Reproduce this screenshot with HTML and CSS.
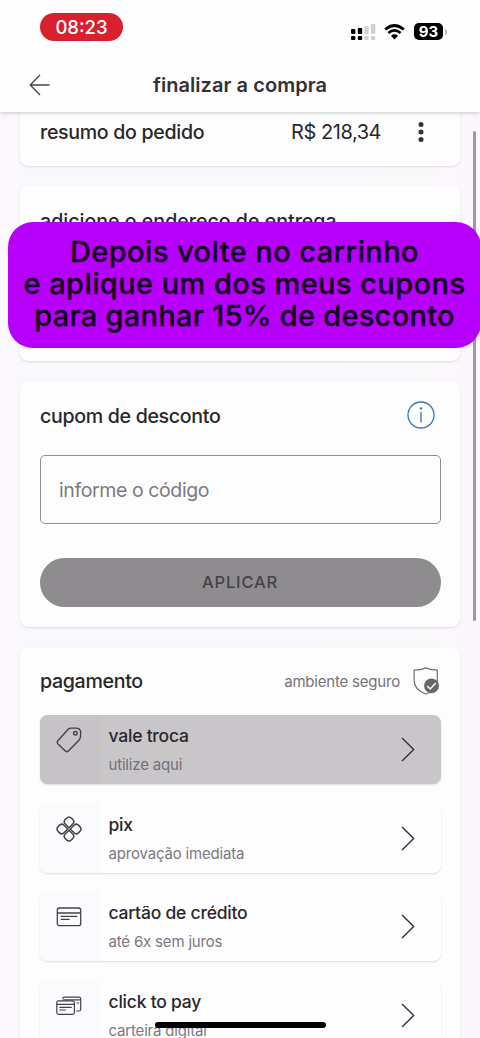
FILE: index.html
```html
<!DOCTYPE html>
<html lang="pt-BR">
<head>
<meta charset="utf-8">
<title>finalizar a compra</title>
<link rel="stylesheet" href="styles.css">
</head>
<body>
<div class="screen">
  <header class="topbar">
    <div class="status">
      <span class="clock">08:23</span>
      <div class="status-icons">
        <svg class="signal" width="25" height="18" viewBox="0 0 25 18"><g fill="#000"><rect x="0" y="6" width="4.4" height="5" rx="1"/><rect x="6.8" y="5" width="4.4" height="6" rx="1"/><rect x="0" y="13" width="4.4" height="4" rx="1"/><rect x="6.8" y="13" width="4.4" height="4" rx="1"/></g><g fill="#d0d0d0"><rect x="13.3" y="3" width="4.4" height="8" rx="1"/><rect x="19.9" y="1" width="4.4" height="10" rx="1"/><rect x="13.3" y="13" width="4.4" height="4" rx="1"/><rect x="19.9" y="13" width="4.4" height="4" rx="1"/></g></svg>
        <svg class="wifi" width="21" height="16" viewBox="0 0 21 16"><g fill="none" stroke="#000" stroke-width="2.7"><path d="M1.2 5.6Q10.5-2.6 19.8 5.6"/><path d="M4.4 9.1Q10.5 3.8 16.6 9.1"/></g><path d="M6.9 11.8Q10.5 8.9 14.1 11.8L10.5 15.6Z"/></svg>
        <span class="battery">93</span><span class="battery-cap"></span>
      </div>
    </div>
    <div class="titlebar">
      <svg class="back" width="22" height="22" viewBox="0 0 22 22"><path d="M20.5 11H1.5M11 1L1.2 11L11 21" fill="none" stroke="#444" stroke-width="1.3"/></svg>
      <h1 class="title">finalizar a compra</h1>
    </div>
  </header>

  <main class="content">
    <section class="card summary">
      <h2 class="heading summary-label">resumo do pedido</h2>
      <span class="total">R$ 218,34</span>
      <svg class="dots" width="6" height="20" viewBox="0 0 6 20" fill="#333"><circle cx="3" cy="2.6" r="2.5"/><circle cx="3" cy="10" r="2.5"/><circle cx="3" cy="17.4" r="2.5"/></svg>
    </section>

    <section class="card address"><h2 class="heading address-label">adicione o endereço de entrega</h2></section>

    <section class="card coupon">
      <div class="row">
        <h2 class="heading coupon-label">cupom de desconto</h2>
        <svg class="info" width="28" height="28" viewBox="0 0 28 28"><circle cx="14" cy="14" r="13" fill="none" stroke="#3777b8" stroke-width="1.3"/><path d="M14 11V21.5" stroke="#3777b8" stroke-width="1.4"/><circle cx="14" cy="7.4" r="1.2" fill="#3777b8"/></svg>
      </div>
      <div class="field">informe o código</div>
      <div class="apply">APLICAR</div>
    </section>

    <section class="card payment">
      <div class="row payment-head">
        <h2 class="heading payment-label">pagamento</h2>
        <span class="secure">ambiente seguro</span>
        <svg class="shield" width="26" height="28" viewBox="0 0 26 28"><path d="M1.1 3.2Q8 3.1 12.9.9Q18 3.1 24.3 3.2V14C24.3 21 18.5 25.5 12.7 27C6 24.5 1.1 19.5 1.1 13Z" fill="none" stroke="#707074" stroke-width="1.2"/><circle cx="18.5" cy="18.8" r="7.4" fill="#68666a"/><path d="M14.2 19L17.2 22L22.8 16" fill="none" stroke="#fff" stroke-width="1.5"/></svg>
      </div>
      <div class="options">
        <div class="option selected">
          <div class="tile"><svg width="26" height="26" viewBox="0 0 26 26" fill="none" stroke="#454347" stroke-width="1.4"><path d="M12.4 2.1Q13.5 1.2 15 1.1L20 1.1Q24.6 1.1 24.7 5.5L24.5 9.5Q24.3 11.7 22.7 13.4L12.4 24Q10.7 25.5 9 23.8L2 17Q.5 15.2 2.1 13.5Z"/><circle cx="19.4" cy="6.3" r="1.8"/></svg></div>
          <div class="labels"><span class="name">vale troca</span><span class="sub">utilize aqui</span></div>
          <svg class="chevron" width="14" height="25" viewBox="0 0 14 25"><path d="M1 1L12.7 12.5L1 24"/></svg>
        </div>
        <div class="option">
          <div class="tile"><svg width="26" height="26" viewBox="0 0 26 26" fill="none" stroke="#454347" stroke-width="1.5"><g transform="rotate(45 13 13)"><path d="M3.6 7.2Q3.6 3.6 7.2 3.6H8.7Q12.1 3.6 12.1 6.8V12.1H6.8Q3.6 12.1 3.6 8.7Z"/><path d="M13.9 12.1V6.8Q13.9 3.6 17.3 3.6H18.8Q22.4 3.6 22.4 7.2V8.7Q22.4 12.1 19.2 12.1Z"/><path d="M13.9 13.9H19.2Q22.4 13.9 22.4 17.3V18.8Q22.4 22.4 18.8 22.4H17.3Q13.9 22.4 13.9 19.2Z"/><path d="M3.6 17.3Q3.6 13.9 6.8 13.9H12.1V19.2Q12.1 22.4 8.7 22.4H7.2Q3.6 22.4 3.6 18.8Z"/></g></svg></div>
          <div class="labels"><span class="name">pix</span><span class="sub">aprovação imediata</span></div>
          <svg class="chevron" width="14" height="25" viewBox="0 0 14 25"><path d="M1 1L12.7 12.5L1 24"/></svg>
        </div>
        <div class="option">
          <div class="tile"><svg width="26" height="26" viewBox="0 0 26 26" fill="none" stroke="#454347" stroke-width="1.3"><rect x="1.3" y="4" width="23.4" height="17.6" rx="2.2"/><path d="M1.3 9H24.7M4.7 12.3H21.3M4.7 15.3H13.6"/></svg></div>
          <div class="labels"><span class="name">cartão de crédito</span><span class="sub">até 6x sem juros</span></div>
          <svg class="chevron" width="14" height="25" viewBox="0 0 14 25"><path d="M1 1L12.7 12.5L1 24"/></svg>
        </div>
        <div class="option">
          <div class="tile"><svg width="26" height="26" viewBox="0 0 26 26" fill="none" stroke="#454347" stroke-width="1.2"><rect x=".8" y="7.8" width="17.6" height="13.6" rx="1.8"/><path d="M.8 11.3H18.4M3.4 14.3H15.8M3.4 17H9.8M6.5 5.8Q6.5 4.2 8.5 4.2H22.8Q24.7 4.2 24.7 6V16.2Q24.7 18 22.9 18H20.2M6.8 6.8H24.7M20.6 10H23.2"/></svg></div>
          <div class="labels"><span class="name">click to pay</span><span class="sub">carteira digital</span></div>
          <svg class="chevron" width="14" height="25" viewBox="0 0 14 25"><path d="M1 1L12.7 12.5L1 24"/></svg>
        </div>
      </div>
    </section>
  </main>

  <div class="banner"><span class="line-one">Depois volte no carrinho</span><span class="line-two">e aplique um dos meus cupons</span><span class="line-three">para ganhar 15% de desconto</span></div>
  <div class="scrollbar"></div>
  <div class="home-indicator"></div>
</div>
</body>
</html>
```
FILE: styles.css
```css
* { box-sizing: border-box; }
body { margin: 0; font-family: Inter, "Liberation Sans", sans-serif; color: #29272b; }
svg { display: block; flex: none; }
.screen { position: relative; z-index: 0; width: 480px; height: 1038px; overflow: hidden; background: linear-gradient(90deg, #faf8fc, #fbf8fc 90%, #fdf6fd); display: flex; flex-direction: column; white-space: nowrap; }
.topbar { flex: none; height: 112px; background: #fefefe; box-shadow: 0 1px 4px rgba(0,0,0,.2); position: relative; }
.status { height: 56px; padding: 13px 33px 0 40px; display: flex; justify-content: space-between; align-items: flex-start; }
.clock { width: 83px; height: 28px; border-radius: 15px; background: #d8202f; color: #fff; font-size: 18.5px; line-height: 29px; font-weight: 500; text-align: center; }
.status-icons { display: flex; padding-top: 10px; }
.wifi { margin: 1px 9px 0 8px; }
.battery { width: 29px; height: 17px; border-radius: 5px; background: #000; color: #fff; font-size: 15px; line-height: 17px; font-weight: 700; text-align: center; }
.battery-cap { width: 2px; height: 6px; margin: 6px 0 0 2px; border-radius: 0 3px 3px 0; background: #bbb; }
.titlebar { height: 56px; padding-left: 29px; display: flex; align-items: center; }
.back { margin-top: 2px; }
.title { margin: 2px 0 0 102px; font-size: 20px; line-height: 26px; font-weight: 600; color: #333136; letter-spacing: .05px; }
.content { flex: none; display: flex; flex-direction: column; gap: 21px; padding: 0 20px; }
.card { background: #fefdfe; border-radius: 8px; box-shadow: 0 1px 2px rgba(60,50,65,.15); }
.heading { margin: 0; font-size: 19.6px; line-height: 26px; font-weight: 500; letter-spacing: -.32px; }
.row { display: flex; align-items: center; justify-content: space-between; }
.summary { height: 54px; margin-bottom: -1px; padding: 7px 36px 0 20px; display: flex; align-items: flex-start; border-radius: 0 0 8px 8px; }
.summary-label { width: 251px; }
.total { font-size: 20px; line-height: 26px; letter-spacing: -.45px; }
.dots { margin: 3px 0 0 auto; }
.address { height: 175px; padding: 22px 20px; }
.address-label { letter-spacing: 0; }
.coupon { height: 245px; padding: 19px 20px 20px; }
.coupon .row { padding-right: 5px; height: 28px; }
.coupon-label { padding-top: 1px; }
.field { height: 69px; margin: 26px -.5px 0; border: 1.5px solid #918e93; border-radius: 5px; padding: 0 18.5px; font-size: 19.5px; line-height: 68px; letter-spacing: -.4px; color: #7d7a7f; }
.apply { height: 49px; margin: 34px -.5px 0; border-radius: 25px; background: #8f8c8f; color: #444146; font-size: 16.5px; line-height: 49px; font-weight: 500; text-align: center; letter-spacing: .8px; }
.payment { height: 420px; padding: 19px 20px; }
.payment-head { height: 28px; padding-right: 1px; }
.secure { margin: 0 13px 0 auto; font-size: 15px; letter-spacing: -.2px; color: #767378; }
.options { display: flex; flex-direction: column; gap: 19.5px; margin: 20px -.5px 0; }
.option { display: flex; height: 69px; border-radius: 8px; background: #fefdff; box-shadow: 0 1px 2px rgba(70,50,65,.17); overflow: hidden; }
.tile { width: 60px; padding: 12px 0 0 16.5px; background: #fbfafc; }
.labels { display: flex; flex-direction: column; padding: 9px 0 0 9px; }
.name { font-size: 17.5px; line-height: 23px; font-weight: 500; letter-spacing: -.22px; }
.sub { margin-top: 7px; font-size: 15px; line-height: 21px; letter-spacing: -.18px; color: #7b787e; }
.chevron { margin: 22px 26px 0 auto; fill: none; stroke: #353238; stroke-width: 1.4; }
.selected { background: #c9c6c9; }
.selected .tile { background: #c6c3c6; }
.selected .sub { color: #737076; }
.banner { position: absolute; left: 8px; top: 222px; width: 473px; height: 126px; padding-top: 14px; border-radius: 25px; background: #b700fb; color: #100018; display: flex; flex-direction: column; align-items: center; font-size: 29px; line-height: 32px; font-weight: 500; letter-spacing: .43px; -webkit-text-stroke: .3px #100018; }
.line-three { letter-spacing: .27px; }
.scrollbar { position: absolute; left: 473px; top: 131px; width: 3px; height: 490px; border-radius: 2px; background: #9c999d; z-index: -1; }
.home-indicator { position: absolute; left: 155px; top: 1022px; width: 171px; height: 6px; border-radius: 3px; background: #000; }
```
